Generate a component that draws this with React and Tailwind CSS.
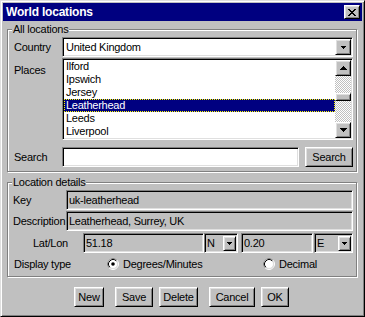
import React from "react";

const raised =
  "bg-[#c0c0c0] border border-t-white border-l-white border-b-black border-r-black shadow-[inset_1px_1px_0_#dfdfdf,inset_-1px_-1px_0_#808080]";
const sunken =
  "border border-t-[#808080] border-l-[#808080] border-b-white border-r-white shadow-[inset_1px_1px_0_#000,inset_-1px_-1px_0_#dfdfdf]";
const group =
  "relative ml-[4px] mr-[5px] border border-[#808080] shadow-[inset_1px_1px_0_#fff,1px_1px_0_#fff]";

function Pix({ rows, color = "#000" }) {
  return (
    <svg width={rows[0].length} height={rows.length} shapeRendering="crispEdges">
      {rows.flatMap((r, y) =>
        [...r].map((c, x) =>
          c === "#" ? <rect key={x + "-" + y} x={x} y={y} width="1" height="1" fill={color} /> : null
        )
      )}
    </svg>
  );
}

const X = ["##....##", ".##..##.", "..####..", "...##...", "..####..", ".##..##.", "##....##"];
const DROP = ["#####", ".###.", "..#.."];
const UP = ["...#...", "..###..", ".#####.", "#######"];
const DOWN = ["#######", ".#####.", "..###..", "...#..."];

function Radio({ on }) {
  return (
    <svg width="12" height="12" viewBox="0 0 12 12">
      <circle cx="6" cy="6" r="5.5" fill="none" stroke="#fff" />
      <path d="M2.11 9.89A5.5 5.5 0 0 1 9.89 2.11" fill="none" stroke="#808080" />
      <circle cx="6" cy="6" r="4.5" fill="#fff" stroke="#dfdfdf" />
      <path d="M2.82 9.18A4.5 4.5 0 0 1 9.18 2.82" fill="none" stroke="#000" />
      {on && <circle cx="6" cy="6" r="1.8" fill="#000" />}
    </svg>
  );
}

function Legend({ children }) {
  return (
    <span className="absolute left-[4px] top-[-7px] px-[1px] bg-[#c0c0c0] leading-[13px]">{children}</span>
  );
}

function Btn({ children, className = "" }) {
  return (
    <div className={`${raised} h-[20px] flex items-center justify-center ${className}`}>{children}</div>
  );
}

const places = ["Ilford", "Ipswich", "Jersey", "Leatherhead", "Leeds", "Liverpool"];

export default function App() {
  return (
    <div className="w-[365px] h-[317px] bg-[#c0c0c0] border border-t-[#dfdfdf] border-l-[#dfdfdf] border-b-black border-r-black shadow-[inset_1px_1px_0_#fff,inset_-1px_-1px_0_#808080] p-[2px] flex flex-col text-[11px] tracking-[-0.25px] text-black font-['Liberation_Sans',Arial,sans-serif]">
      <div className="h-[18px] shrink-0 bg-[#000080] flex items-center justify-between pl-[3px] pr-[2px]">
        <span className="text-white font-bold text-[12px] tracking-[-0.2px]">World locations</span>
        <div className={`${raised} w-[16px] h-[14px] flex items-center justify-center`}>
          <Pix rows={X} />
        </div>
      </div>

      <div className={`${group} mt-[8px] h-[143px] pt-[7px] pl-[6px] pr-[3px] flex flex-col`}>
        <Legend>All locations</Legend>
        <div className="flex items-center h-[20px]">
          <span className="w-[48px]">Country</span>
          <div className={`${sunken} flex-1 h-full bg-white flex items-center p-[1px]`}>
            <span className="flex-1 pl-[2px]">United Kingdom</span>
            <div className={`${raised} w-[16px] h-[16px] flex items-center justify-center`}>
              <Pix rows={DROP} />
            </div>
          </div>
        </div>
        <div className="flex mt-[1px] h-[82px]">
          <span className="w-[48px] pt-[4px]">Places</span>
          <div className={`${sunken} flex-1 h-full bg-white flex p-[1px] overflow-hidden`}>
            <div className="flex-1 flex flex-col">
              {places.map((p) =>
                p === "Leatherhead" ? (
                  <div
                    key={p}
                    className="h-[13px] leading-[11px] pl-[1px] bg-[#000080] text-white border border-dotted border-[#ffff00]"
                  >
                    {p}
                  </div>
                ) : (
                  <div key={p} className="h-[13px] leading-[13px] pl-[2px]">
                    {p}
                  </div>
                )
              )}
            </div>
            <div className="w-[16px] flex flex-col">
              <div className={`${raised} h-[16px] flex items-center justify-center`}>
                <Pix rows={UP} />
              </div>
              <div className="flex-1 bg-[repeating-conic-gradient(#c0c0c0_0_25%,#fff_0_50%)] bg-[length:2px_2px]">
                <div className={`${raised} h-[8px] mt-[17px]`} />
              </div>
              <div className={`${raised} h-[16px] flex items-center justify-center`}>
                <Pix rows={DOWN} />
              </div>
            </div>
          </div>
        </div>
        <div className="flex items-center mt-[7px] h-[20px]">
          <span className="w-[48px]">Search</span>
          <div className={`${sunken} w-[237px] h-full bg-white`} />
          <Btn className="w-[48px] ml-[6px] h-[19px]">Search</Btn>
        </div>
      </div>

      <div className={`${group} mt-[10px] h-[95px] pt-[7px] pl-[5px] pr-[3px] flex flex-col`}>
        <Legend>Location details</Legend>
        <div className="flex items-center h-[20px]">
          <span className="w-[53px] whitespace-nowrap">Key</span>
          <div className={`${sunken} flex-1 h-full flex items-center pl-[2px]`}>uk-leatherhead</div>
        </div>
        <div className="flex items-center h-[20px] mt-[1px]">
          <span className="w-[53px] whitespace-nowrap">Description</span>
          <div className={`${sunken} flex-1 h-full flex items-center pl-[2px]`}>Leatherhead, Surrey, UK</div>
        </div>
        <div className="flex items-center h-[20px] mt-[2px]">
          <span className="ml-[20px] w-[50px]">Lat/Lon</span>
          <div className={`${sunken} w-[121px] h-full flex items-center pl-[2px]`}>51.18</div>
          <div className={`${sunken} w-[34px] h-full flex items-center pl-[2px] pr-[1px]`}>
            <span className="flex-1">N</span>
            <div className={`${raised} w-[13px] h-[15px] flex items-center justify-center`}>
              <Pix rows={DROP} />
            </div>
          </div>
          <div className={`${sunken} w-[72px] ml-[3px] h-full flex items-center pl-[2px]`}>0.20</div>
          <div className={`${sunken} flex-1 ml-[1px] h-full flex items-center pl-[2px] pr-[1px]`}>
            <span className="flex-1">E</span>
            <div className={`${raised} w-[13px] h-[15px] flex items-center justify-center`}>
              <Pix rows={DROP} />
            </div>
          </div>
        </div>
        <div className="flex items-center h-[16px] mt-[3px]">
          <span className="w-[94px] pl-[1px]">Display type</span>
          <Radio on />
          <span className="ml-[4px] w-[140px]">Degrees/Minutes</span>
          <Radio />
          <span className="ml-[4px]">Decimal</span>
        </div>
      </div>

      <div className="flex mt-[10px] pl-[71px]">
        <Btn className="w-[30px]">New</Btn>
        <Btn className="w-[38px] ml-[11px]">Save</Btn>
        <Btn className="w-[39px] ml-[6px]">Delete</Btn>
        <Btn className="w-[46px] ml-[11px]">Cancel</Btn>
        <Btn className="w-[28px] ml-[6px]">OK</Btn>
      </div>
    </div>
  );
}
